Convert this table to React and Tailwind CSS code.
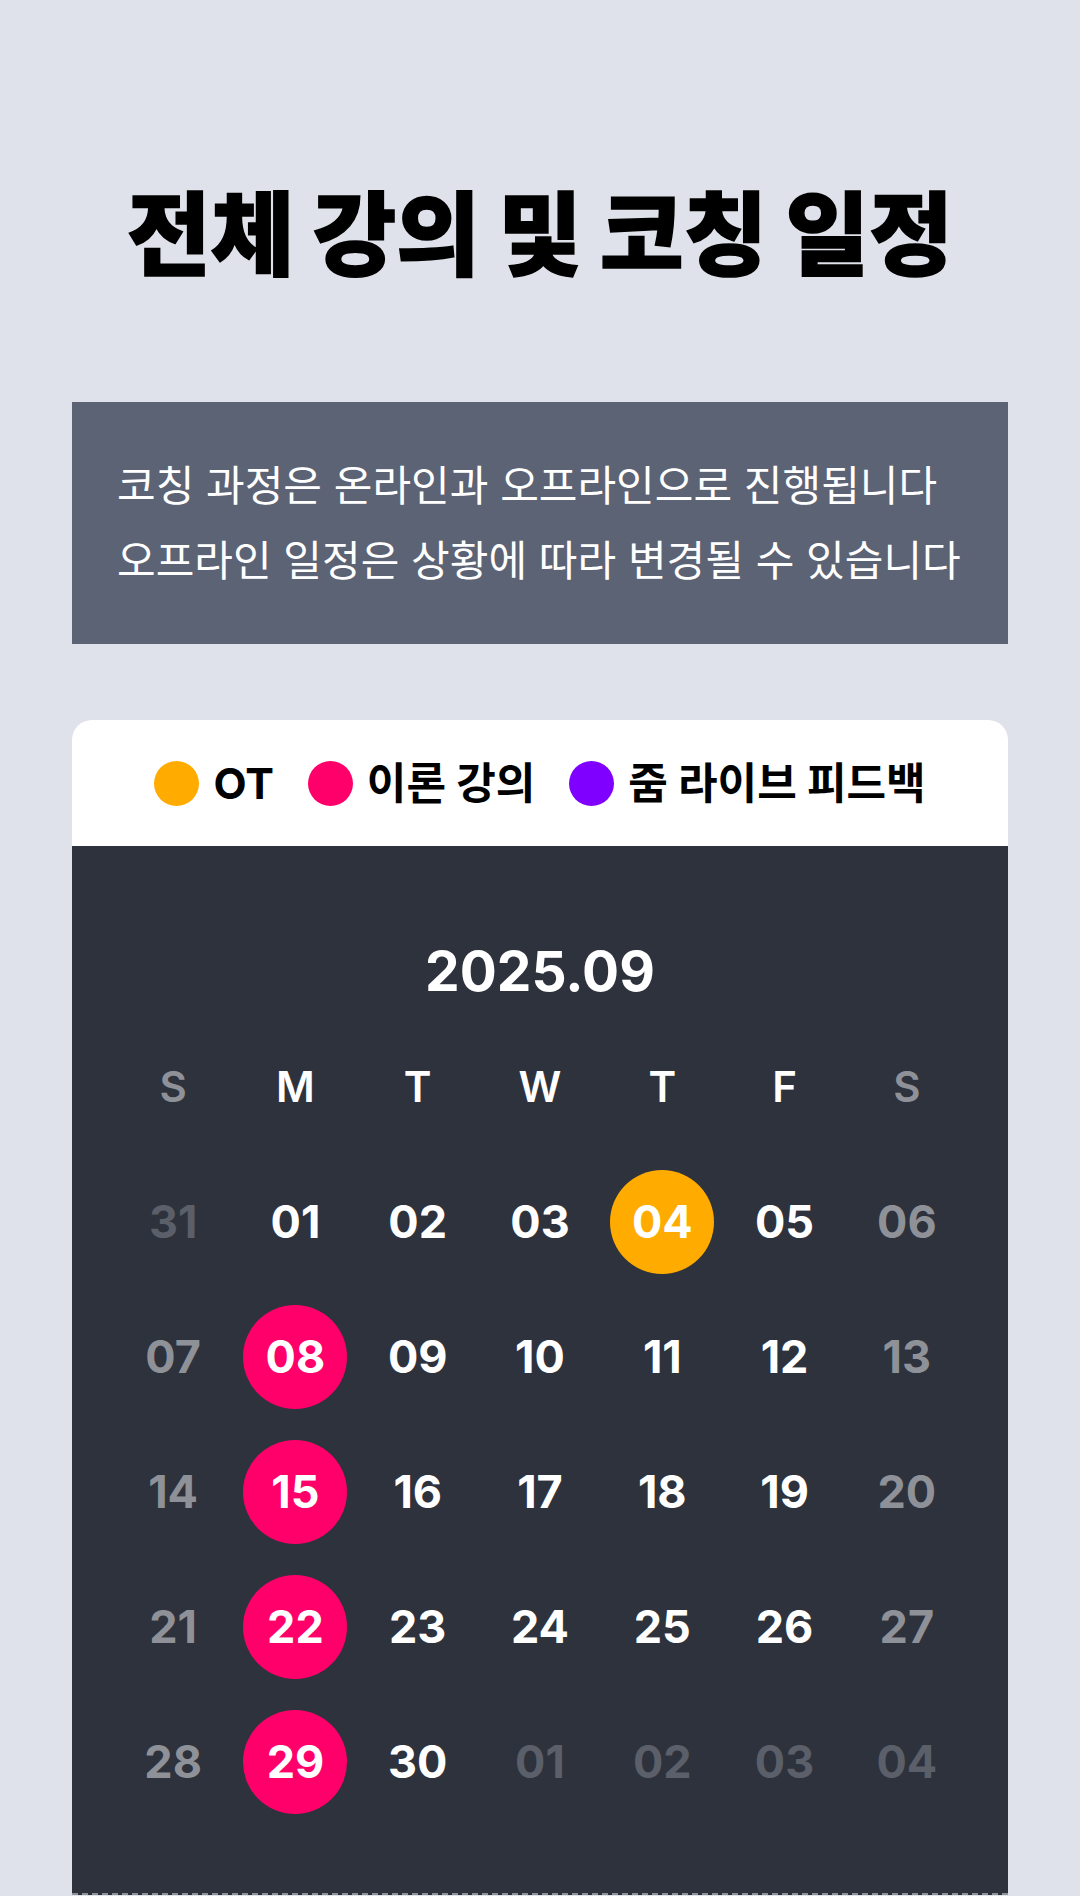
import React from 'react';

const weekDays = ['S', 'M', 'T', 'W', 'T', 'F', 'S'];

// tone: 'out' = other month, 'off' = weekend, 'on' = weekday
const weeks = [
  [['31', 'out'], ['01', 'on'], ['02', 'on'], ['03', 'on'], ['04', 'on', 'ot'], ['05', 'on'], ['06', 'off']],
  [['07', 'off'], ['08', 'on', 'lecture'], ['09', 'on'], ['10', 'on'], ['11', 'on'], ['12', 'on'], ['13', 'off']],
  [['14', 'off'], ['15', 'on', 'lecture'], ['16', 'on'], ['17', 'on'], ['18', 'on'], ['19', 'on'], ['20', 'off']],
  [['21', 'off'], ['22', 'on', 'lecture'], ['23', 'on'], ['24', 'on'], ['25', 'on'], ['26', 'on'], ['27', 'off']],
  [['28', 'off'], ['29', 'on', 'lecture'], ['30', 'on'], ['01', 'out'], ['02', 'out'], ['03', 'out'], ['04', 'out']],
];

const toneClass = {
  on: 'text-white',
  off: 'text-[#8e9198]',
  out: 'text-[#5b5f69]',
};

const eventClass = {
  ot: 'bg-[#ffab00]',
  lecture: 'bg-[#ff006b]',
  zoom: 'bg-[#7f00ff]',
};

function LegendItem({ color, label }) {
  return (
    <div className="flex items-center gap-[14px]">
      <span className={`w-[45px] h-[45px] rounded-full ${color}`}></span>
      <span className="text-[43px] font-bold text-black leading-none">{label}</span>
    </div>
  );
}

function DayCell({ day, tone, event }) {
  return (
    <div className="flex items-center justify-center h-[135px]">
      {event ? (
        <div className={`w-[104px] h-[104px] rounded-full flex items-center justify-center ${eventClass[event]}`}>
          <span className="text-[45px] font-bold leading-none text-white">{day}</span>
        </div>
      ) : (
        <span className={`text-[45px] font-bold leading-none ${toneClass[tone]}`}>{day}</span>
      )}
    </div>
  );
}

export default function App() {
  return (
    <div
      className="w-[1080px] h-[1896px] overflow-hidden bg-[#dfe2ea] pt-[190px]"
      style={{ fontFamily: 'Inter, "Noto Sans CJK KR", sans-serif' }}
    >
      <h1 className="text-center text-[91px] font-black leading-none text-black [-webkit-text-stroke:1.5px_#000]">
        전체 강의 및 코칭 일정
      </h1>

      {/* Notice */}
      <div className="mx-[72px] mt-[121px] bg-[#5c6375] px-[45px] py-[46px] text-white text-[42px] leading-[75px]">
        <p>코칭 과정은 온라인과 오프라인으로 진행됩니다</p>
        <p>오프라인 일정은 상황에 따라 변경될 수 있습니다</p>
      </div>

      {/* Calendar card */}
      <div className="mx-[72px] mt-[76px] rounded-t-[20px] overflow-hidden">
        <div className="h-[126px] bg-white flex items-center justify-center gap-[34px]">
          <LegendItem color="bg-[#ffab00]" label="OT" />
          <LegendItem color="bg-[#ff006b]" label="이론 강의" />
          <LegendItem color="bg-[#7f00ff]" label="줌 라이브 피드백" />
        </div>

        <div className="bg-[#2e323c] px-[40px] pt-[98px] pb-[64px] border-b-2 border-dashed border-[#8e9198]">
          <div className="text-center text-white text-[55px] font-bold leading-none">2025.09</div>

          <div className="grid grid-cols-7 mt-[20px]">
            {weekDays.map((d, i) => (
              <div
                key={i}
                className={`flex items-center justify-center h-[135px] text-[42px] font-semibold leading-none ${
                  i === 0 || i === 6 ? 'text-[#8e9198]' : 'text-white'
                }`}
              >
                {d}
              </div>
            ))}
          </div>

          <div className="grid grid-cols-7">
            {weeks.map((week, wi) =>
              week.map(([day, tone, event], di) => (
                <DayCell key={`${wi}-${di}`} day={day} tone={tone} event={event} />
              ))
            )}
          </div>
        </div>
      </div>
    </div>
  );
}
